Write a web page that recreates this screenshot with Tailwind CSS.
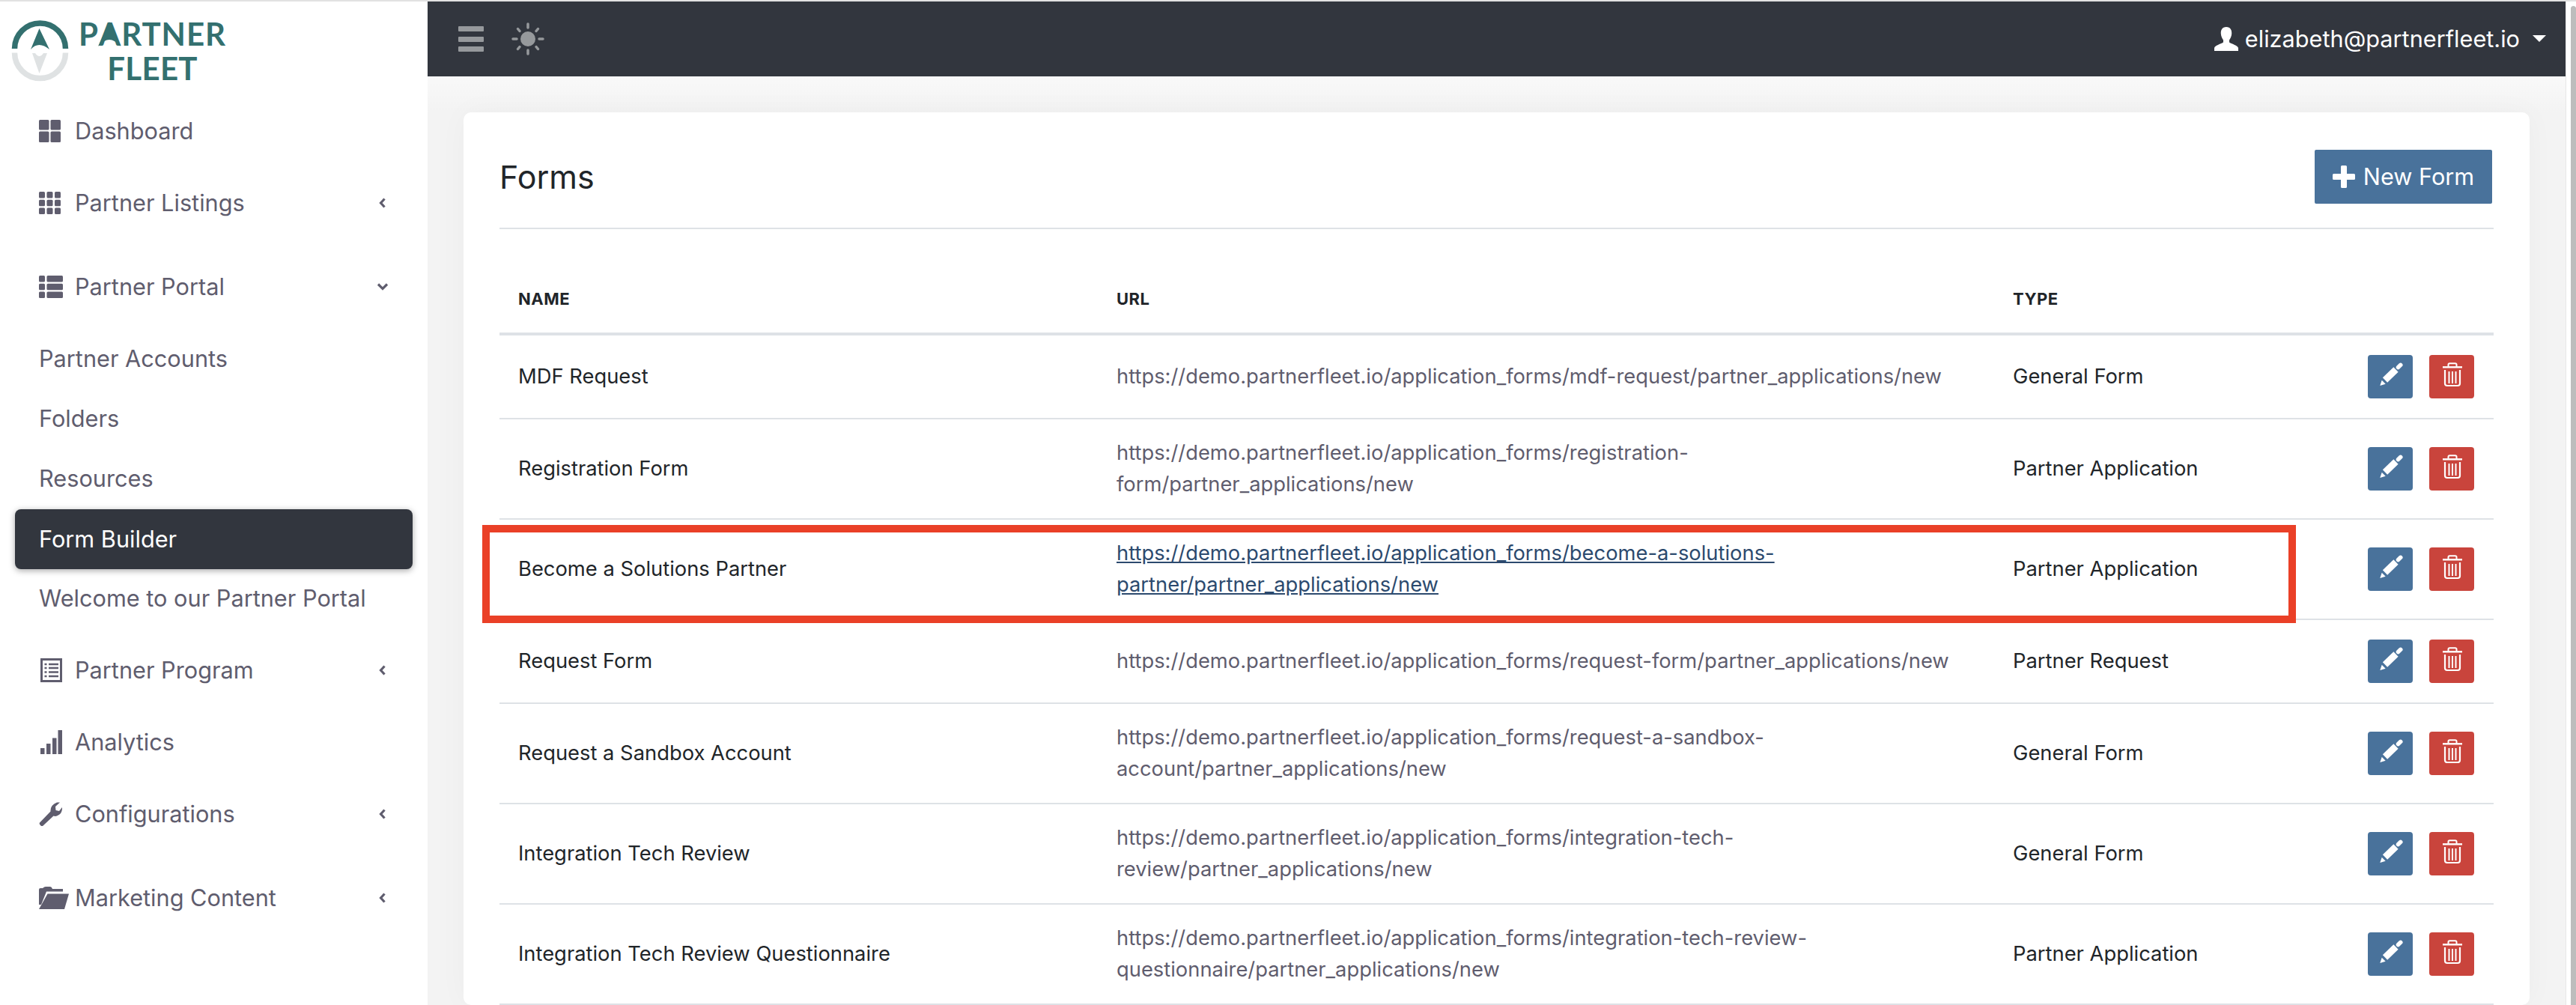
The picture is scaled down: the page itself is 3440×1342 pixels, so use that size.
<!DOCTYPE html>
<html lang="en">
<head>
<meta charset="utf-8">
<title>Forms</title>
<script src="https://cdn.jsdelivr.net/npm/@tailwindcss/browser@4"></script>
</head>
<body class="bg-white font-['Inter',sans-serif]">
<svg class="hidden">
  <symbol id="pencil" viewBox="0 0 60 58"><path d="M16.3 41l2.4-7.3 5 5z" fill="#fff"/><path d="M23 33.5L37.5 19.5" stroke="#fff" stroke-width="9" fill="none"/><path d="M40.5 16.5L43.8 13.3" stroke="#fff" stroke-width="5.5" stroke-linecap="round" fill="none"/></symbol>
  <symbol id="trash" viewBox="0 0 60 58"><g stroke="#fff" fill="none"><path d="M18 16.3H44" stroke-width="2.4"/><path d="M25.5 15.5V13a1.8 1.8 0 0 1 1.8-1.8h7.4a1.8 1.8 0 0 1 1.8 1.8v2.5" stroke-width="2"/><path d="M21 20V38a3 3 0 0 0 3 3h14a3 3 0 0 0 3-3V20" stroke-width="2.2"/><path d="M26.5 22V38M31 22V38M35.500 22V38" stroke-width="2"/></g></symbol>
</svg>
<div class="h-[2px] bg-[#e2e2e2]"></div>
<div class="flex h-[1340px] overflow-hidden">
  <aside class="w-[571px] shrink-0 bg-white text-[30.7px] text-[#5f5d6e]">
    <div class="relative flex h-[133px] items-start">
      <svg class="absolute left-0 top-0" width="110" height="120" viewBox="0 2 110 120" fill="none">
        <path d="M19.500 65A34 34 0 0 1 87.500 65" stroke="#33706f" stroke-width="7.500"/>
        <path d="M19.500 70.500A34 34 0 0 0 87.500 70.500" stroke="#dfe2e3" stroke-width="7.500"/>
        <path d="M52.500 38L66 66Q59 60 52.500 60Q46 60 41 66Z" fill="#33706f"/>
        <path d="M43 71H47Q52.500 79 58 71H63L52.500 98Z" fill="#dfe2e3"/>
      </svg>
      <div class="ml-[105px] mt-[20px] flex flex-col items-center font-['Lato',sans-serif] text-[42px] font-bold leading-[46px] text-[#33706f]">
        <div class="tracking-[1px]">P<span class="relative inline-block">A<svg class="absolute left-[-1px] top-[7px]" width="30" height="33" viewBox="0 0 30 33"><path d="M15 0L30 33Q22 24 15 24Q8 24 0 33Z" fill="#33706f"/></svg></span>RTNER</div>
        <div class="tracking-[0.300px]">FLEET</div>
      </div>
    </div>
    <nav class="flex flex-col">
      <a class="flex h-[80px] items-center pl-[52px]"><svg class="mr-[19px] w-[29px]" height="30" viewBox="0 0 29 30" fill="#5f5d6e"><rect width="13.500" height="13.500" rx="1.500"/><rect x="15.500" width="13.500" height="13.500" rx="1.500"/><rect y="15.500" width="13.500" height="14.500" rx="1.500"/><rect x="15.500" y="15.500" width="13.500" height="14.500" rx="1.500"/></svg>Dashboard</a>
      <a class="mt-[16px] flex h-[80px] items-center justify-between pl-[52px] pr-[55px]"><span class="flex items-center"><svg class="mr-[19px] w-[29px]" height="30" viewBox="0 0 29 30" fill="#5f5d6e"><rect width="8" height="8.500" rx="1.500"/><rect x="10.500" width="8" height="8.500" rx="1.500"/><rect x="21" width="8" height="8.500" rx="1.500"/><rect y="10.700" width="8" height="8.500" rx="1.500"/><rect x="10.500" y="10.700" width="8" height="8.500" rx="1.500"/><rect x="21" y="10.700" width="8" height="8.500" rx="1.500"/><rect y="21.500" width="8" height="8.500" rx="1.500"/><rect x="10.500" y="21.500" width="8" height="8.500" rx="1.500"/><rect x="21" y="21.500" width="8" height="8.500" rx="1.500"/></svg>Partner Listings</span><svg width="10" height="14" viewBox="0 0 10 14" fill="none"><path d="M7.500 1.500L2.500 7l5 5.500" stroke="#5f5d6e" stroke-width="3.200"/></svg></a>
      <a class="mt-[32px] flex h-[80px] items-center justify-between pl-[52px] pr-[52px]"><span class="flex items-center"><svg class="mr-[16px] w-[32px]" height="30" viewBox="0 0 32 30" fill="#5f5d6e"><rect width="8" height="8.500" rx="1.500"/><rect x="10.500" width="21.500" height="8.500" rx="1.500"/><rect y="10.700" width="8" height="8.500" rx="1.500"/><rect x="10.500" y="10.700" width="21.500" height="8.500" rx="1.500"/><rect y="21.500" width="8" height="8.500" rx="1.500"/><rect x="10.500" y="21.500" width="21.500" height="8.500" rx="1.500"/></svg>Partner Portal</span><svg width="16" height="10" viewBox="0 0 16 10" fill="none"><path d="M2 1.500L8 7.500l6-6" stroke="#5f5d6e" stroke-width="3.200"/></svg></a>
      <a class="mt-[16px] flex h-[80px] items-center pl-[52px]">Partner Accounts</a>
      <a class="flex h-[80px] items-center pl-[52px]">Folders</a>
      <a class="flex h-[80px] items-center pl-[52px]">Resources</a>
      <a class="mx-[20px] mt-[1px] flex h-[80px] items-center rounded-[8px] bg-[#32363e] pl-[32px] text-white shadow-[0_2px_8px_rgba(0,0,0,0.35)]">Form Builder</a>
      <a class="mt-[-1px] flex h-[80px] items-center pl-[52px]">Welcome to our Partner Portal</a>
      <a class="mt-[16px] flex h-[80px] items-center justify-between pl-[54px] pr-[55px]"><span class="flex items-center"><svg class="mr-[17px] w-[29px]" height="32" viewBox="0 0 29 32" fill="none"><rect x="1.500" y="1.500" width="26" height="29" stroke="#5f5d6e" stroke-width="3"/><path d="M5.500 8h3M11 8h13M5.500 13h3M11 13h13M5.500 18.500h3M11 18.500h13M5.500 24h3M11 24h13" stroke="#5f5d6e" stroke-width="2.400"/></svg>Partner Program</span><svg width="10" height="14" viewBox="0 0 10 14" fill="none"><path d="M7.500 1.500L2.500 7l5 5.500" stroke="#5f5d6e" stroke-width="3.200"/></svg></a>
      <a class="mt-[16px] flex h-[80px] items-center pl-[54px]"><svg class="mr-[17px] w-[29px]" height="32" viewBox="0 0 29 32" fill="#5f5d6e"><rect y="24" width="5.500" height="8"/><rect x="8" y="18" width="5.500" height="14"/><rect x="16" y="10.500" width="5.500" height="21.500"/><rect x="23.500" width="5.500" height="32"/></svg>Analytics</a>
      <a class="mt-[16px] flex h-[80px] items-center justify-between pl-[52px] pr-[55px]"><span class="flex items-center"><svg class="mr-[17px] w-[31px]" height="32" viewBox="0 0 31 32" fill="#5f5d6e"><path d="M1 27.500L15.500 12.500Q15 4 24 0.500L28 0.500L22 6L22.500 11L27 12L31 7Q31.500 15 25 18Q22 19.500 19.500 18.500L5 32Q3.500 32.500 2 31Q0 29 1 27.500Z"/></svg>Configurations</span><svg width="10" height="14" viewBox="0 0 10 14" fill="none"><path d="M7.500 1.500L2.500 7l5 5.500" stroke="#5f5d6e" stroke-width="3.200"/></svg></a>
      <a class="mt-[32px] flex h-[80px] items-center justify-between pl-[52px] pr-[55px]"><span class="flex items-center"><svg class="mr-[8px] w-[40px]" height="30" viewBox="0 0 40 30" fill="#5f5d6e"><path d="M0 4Q0 2 2 2H5Q7 0 9 0H15Q17 0 18 3H32V6.500H10L3 24H0Z"/><path d="M11.500 9.500H40L34 30H0Z"/></svg>Marketing Content</span><svg width="10" height="14" viewBox="0 0 10 14" fill="none"><path d="M7.500 1.500L2.500 7l5 5.500" stroke="#5f5d6e" stroke-width="3.200"/></svg></a>
    </nav>
  </aside>
  <main class="min-w-0 flex-1 bg-[#f3f3f3] bg-[linear-gradient(#f3f3f3,#f3f3f3)]">
    <header class="flex h-[100px] items-center justify-between bg-[#32363e] pl-[41px] pr-[26px]">
      <div class="flex items-center">
        <div class="flex w-[34px] flex-col gap-[6.500px]"><div class="h-[7px] rounded-[1px] bg-[#96999c]"></div><div class="h-[7px] rounded-[1px] bg-[#96999c]"></div><div class="h-[7px] rounded-[1px] bg-[#96999c]"></div></div>
        <svg class="ml-[37px]" width="44" height="44" viewBox="0 0 44 44" fill="#96999c"><ellipse cx="22" cy="22" rx="10" ry="10"/><g stroke="#96999c" stroke-width="3.500" stroke-linecap="round"><path d="M22 2V7M22 37V42M2 22H7M37 22H42M8.500 8.500L11 11.500M33 32.500L35.500 35.500M35.500 8.500L33 11.500M11 32.500L8.500 35.500"/></g></svg>
      </div>
      <div class="flex items-center text-[30.7px] text-white">
        <svg class="mr-[9px]" width="32" height="32" viewBox="0 0 32 32" fill="#fff"><path d="M16 0C10.500 0 8.500 4 8.800 9C9 12.500 10.500 15.500 12 17.500V20.500C8 23 1 24.500 0 28V32H32V28C31 24.500 24 23 20 20.500V17.500C21.500 15.500 23 12.500 23.200 9C23.500 4 21.500 0 16 0Z"/></svg>
        <span>elizabeth@partnerfleet.io</span>
        <svg class="ml-[17px]" width="18" height="9" viewBox="0 0 18 9" fill="#fff"><path d="M0 0H18L9 9Z"/></svg>
      </div>
    </header>
    <div class="bg-[linear-gradient(#f9f9f9,#f3f3f3_48px)] px-[48px] pt-[48px]">
    <section class="rounded-[10px] bg-white px-[48px] pt-[50px] shadow-[0_0_40px_rgba(0,0,0,0.03)]">
      <div class="flex h-[106px] items-start justify-between border-b-2 border-[#dee2e6]">
        <h1 class="mt-[8px] text-[43px] leading-[56px] text-[#212529]">Forms</h1>
        <button class="mr-[2px] flex h-[72px] w-[237px] items-center justify-center rounded-[2px] bg-[#49729b] text-[30.7px] text-white"><svg class="mr-[11px]" width="30" height="30" viewBox="0 0 30 30" fill="#fff"><path d="M11 1.500Q11 0 12.500 0H17.500Q19 0 19 1.500V11H28.500Q30 11 30 12.500V17.500Q30 19 28.500 19H19V28.500Q19 30 17.500 30H12.500Q11 30 11 28.500V19H1.500Q0 19 0 17.500V12.500Q0 11 1.500 11H11Z"/></svg>New Form</button>
      </div>
      <div class="text-[27.35px] leading-[42px] text-[#212529]">
        <div class="flex h-[142px] items-center border-b-4 border-[#dee2e6] pb-[4px] pt-[51px] text-[22px] font-bold uppercase tracking-[0.5px]">
          <div class="w-[824px] pl-[25px]">Name</div><div class="w-[1197px]">URL</div><div>Type</div>
        </div>
        <div class="flex h-[112px] items-center border-b-2 border-[#dee2e6]">
          <div class="w-[824px] pl-[25px]">MDF Request</div><div class="w-[1197px] pr-[50px] text-[#5f5d6e]">https://demo.partnerfleet.io/application_forms/mdf-request/partner_applications/new</div><div class="flex-1">General Form</div>
          <div class="mr-[26px] flex gap-[22px]"><button class="h-[58px] w-[60px] rounded-[4px] bg-[#49729b]"><svg width="60" height="58"><use href="#pencil"/></svg></button><button class="h-[58px] w-[60px] rounded-[4px] bg-[#c9443c]"><svg width="60" height="58"><use href="#trash"/></svg></button></div>
        </div>
        <div class="flex h-[134px] items-center border-b-2 border-[#dee2e6]">
          <div class="w-[824px] pl-[25px]">Registration Form</div><div class="w-[1197px] pr-[50px] text-[#5f5d6e]">https://demo.partnerfleet.io/application_forms/registration-form/partner_applications/new</div><div class="flex-1">Partner Application</div>
          <div class="mr-[26px] flex gap-[22px]"><button class="h-[58px] w-[60px] rounded-[4px] bg-[#49729b]"><svg width="60" height="58"><use href="#pencil"/></svg></button><button class="h-[58px] w-[60px] rounded-[4px] bg-[#c9443c]"><svg width="60" height="58"><use href="#trash"/></svg></button></div>
        </div>
        <div class="relative flex h-[134px] items-center border-b-2 border-[#dee2e6]">
          <div class="absolute left-[-23px] top-[7px] h-[131px] w-[2422px] border-[10px] border-[#ea4027]"></div>
          <div class="w-[824px] pl-[25px]">Become a Solutions Partner</div><div class="w-[1197px] pr-[50px] text-[#2c4a6e] underline">https://demo.partnerfleet.io/application_forms/become-a-solutions-partner/partner_applications/new</div><div class="flex-1">Partner Application</div>
          <div class="mr-[26px] flex gap-[22px]"><button class="h-[58px] w-[60px] rounded-[4px] bg-[#49729b]"><svg width="60" height="58"><use href="#pencil"/></svg></button><button class="h-[58px] w-[60px] rounded-[4px] bg-[#c9443c]"><svg width="60" height="58"><use href="#trash"/></svg></button></div>
        </div>
        <div class="flex h-[112px] items-center border-b-2 border-[#dee2e6]">
          <div class="w-[824px] pl-[25px]">Request Form</div><div class="w-[1197px] pr-[50px] text-[#5f5d6e]">https://demo.partnerfleet.io/application_forms/request-form/partner_applications/new</div><div class="flex-1">Partner Request</div>
          <div class="mr-[26px] flex gap-[22px]"><button class="h-[58px] w-[60px] rounded-[4px] bg-[#49729b]"><svg width="60" height="58"><use href="#pencil"/></svg></button><button class="h-[58px] w-[60px] rounded-[4px] bg-[#c9443c]"><svg width="60" height="58"><use href="#trash"/></svg></button></div>
        </div>
        <div class="flex h-[134px] items-center border-b-2 border-[#dee2e6]">
          <div class="w-[824px] pl-[25px]">Request a Sandbox Account</div><div class="w-[1197px] pr-[50px] text-[#5f5d6e]">https://demo.partnerfleet.io/application_forms/request-a-sandbox-account/partner_applications/new</div><div class="flex-1">General Form</div>
          <div class="mr-[26px] flex gap-[22px]"><button class="h-[58px] w-[60px] rounded-[4px] bg-[#49729b]"><svg width="60" height="58"><use href="#pencil"/></svg></button><button class="h-[58px] w-[60px] rounded-[4px] bg-[#c9443c]"><svg width="60" height="58"><use href="#trash"/></svg></button></div>
        </div>
        <div class="flex h-[134px] items-center border-b-2 border-[#dee2e6]">
          <div class="w-[824px] pl-[25px]">Integration Tech Review</div><div class="w-[1197px] pr-[50px] text-[#5f5d6e]">https://demo.partnerfleet.io/application_forms/integration-tech-review/partner_applications/new</div><div class="flex-1">General Form</div>
          <div class="mr-[26px] flex gap-[22px]"><button class="h-[58px] w-[60px] rounded-[4px] bg-[#49729b]"><svg width="60" height="58"><use href="#pencil"/></svg></button><button class="h-[58px] w-[60px] rounded-[4px] bg-[#c9443c]"><svg width="60" height="58"><use href="#trash"/></svg></button></div>
        </div>
        <div class="flex h-[134px] items-center border-b-2 border-[#dee2e6]">
          <div class="w-[824px] pl-[25px]">Integration Tech Review Questionnaire</div><div class="w-[1197px] pr-[50px] text-[#5f5d6e]">https://demo.partnerfleet.io/application_forms/integration-tech-review-questionnaire/partner_applications/new</div><div class="flex-1">Partner Application</div>
          <div class="mr-[26px] flex gap-[22px]"><button class="h-[58px] w-[60px] rounded-[4px] bg-[#49729b]"><svg width="60" height="58"><use href="#pencil"/></svg></button><button class="h-[58px] w-[60px] rounded-[4px] bg-[#c9443c]"><svg width="60" height="58"><use href="#trash"/></svg></button></div>
        </div>
      </div>
    </section>
    </div>
  </main>
  <div class="w-[14px] shrink-0 border-l border-[#e6e6e6] bg-white pl-[6px] pt-[6px]"><div class="h-full rounded-t-[4px] bg-[#bdbdbd]"></div></div>
</div>
</body>
</html>
